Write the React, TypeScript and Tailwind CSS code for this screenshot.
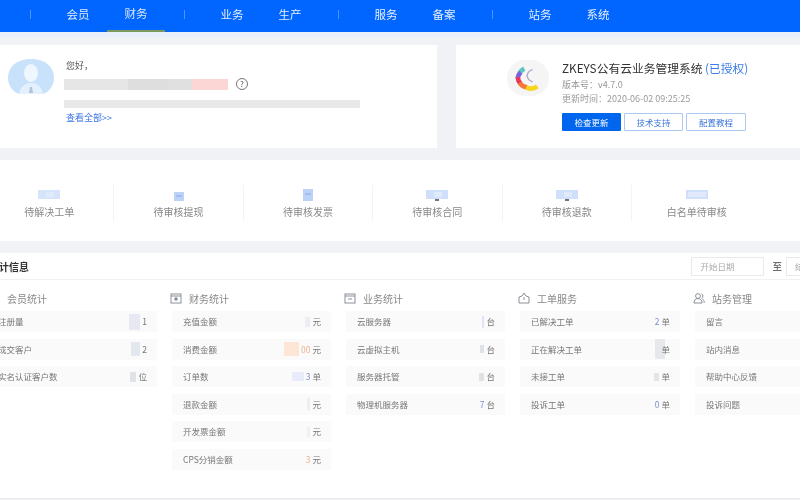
import type { ReactNode } from 'react';

const navGroups = [['会员', '财务'], ['业务', '生产'], ['服务', '备案'], ['站务', '系统']];

type Row = { label: string; blockW?: number; blockH?: number; tint?: string; value?: string; valueClass?: string; unit?: string };

const columns: { title: string; icon: ReactNode; rows: Row[] }[] = [
  {
    title: '会员统计',
    icon: null,
    rows: [
      { label: '注册量', blockW: 11, blockH: 16, tint: 'bg-[#e6e9f1]', value: '1', unit: '' },
      { label: '成交客户', blockW: 9, blockH: 14, tint: 'bg-[#e3e8ee]', value: '2', unit: '' },
      { label: '实名认证客户数', blockW: 6, blockH: 10, tint: 'bg-[#dfe2e6]', value: '', unit: '位' },
    ],
  },
  {
    title: '财务统计',
    icon: (
      <svg viewBox="0 0 12 12" className="w-3 h-3" fill="none" stroke="#8a8f98">
        <rect x="1" y="2" width="10" height="9" />
        <path d="M1 4h10" />
        <circle cx="6" cy="7" r="1.3" fill="#8a8f98" />
      </svg>
    ),
    rows: [
      { label: '充值金额', blockW: 5, blockH: 10, tint: 'bg-[#eceef1]', unit: '元' },
      { label: '消费金额', blockW: 15, blockH: 14, tint: 'bg-[#fde6d6]', value: '00', valueClass: 'text-[#f0b48c]', unit: '元' },
      { label: '订单数', blockW: 12, blockH: 9, tint: 'bg-[#e8ebfa]', value: '3', valueClass: 'text-[#7d8fd8]', unit: '单' },
      { label: '退款金额', blockW: 3, blockH: 12, tint: 'bg-[#eceef1]', unit: '元' },
      { label: '开发票金额', blockW: 3, blockH: 10, tint: 'bg-[#f0f1f3]', unit: '元' },
      { label: 'CPS分销金额', blockW: 0, value: '3', valueClass: 'text-[#f0b48c]', unit: '元' },
    ],
  },
  {
    title: '业务统计',
    icon: (
      <svg viewBox="0 0 12 12" className="w-3 h-3" fill="none" stroke="#8a8f98">
        <rect x="1" y="2" width="10" height="9" />
        <path d="M1 4h10M4 7h4" />
      </svg>
    ),
    rows: [
      { label: '云服务器', blockW: 2, blockH: 12, tint: 'bg-[#e1e4f8]', value: '', unit: '台' },
      { label: '云虚拟主机', blockW: 4, blockH: 8, tint: 'bg-[#dfe2e6]', unit: '台' },
      { label: '服务器托管', blockW: 5, blockH: 8, tint: 'bg-[#dfe1e4]', unit: '台' },
      { label: '物理机服务器', blockW: 0, value: '7', valueClass: 'text-[#7d8fd8]', unit: '台' },
    ],
  },
  {
    title: '工单服务',
    icon: (
      <svg viewBox="0 0 12 12" className="w-3 h-3" fill="none" stroke="#8a8f98">
        <path d="M1 5l3-1 2-3 2 3 3 1v6H1z" />
        <path d="M6 5v3" />
      </svg>
    ),
    rows: [
      { label: '已解决工单', blockW: 0, value: '2', valueClass: 'text-[#7d8fd8]', unit: '单' },
      { label: '正在解决工单', blockW: 10, blockH: 20, tint: 'bg-[#e6e8ec] -mr-[6px]', unit: '单' },
      { label: '未接工单', blockW: 5, blockH: 8, tint: 'bg-[#e3e5e8]', unit: '单' },
      { label: '投诉工单', blockW: 0, value: '0', valueClass: 'text-[#7d8fd8]', unit: '单' },
    ],
  },
  {
    title: '站务管理',
    icon: (
      <svg viewBox="0 0 12 12" className="w-3 h-3" fill="none" stroke="#8a8f98">
        <circle cx="5" cy="4" r="2.4" />
        <path d="M1 11c0-3 1.6-4.4 4-4.4s4 1.4 4 4.4zM8.5 1.8a2.4 2.4 0 0 1 0 4.4M9.5 7c1 .5 1.7 1.8 1.7 4" />
      </svg>
    ),
    rows: [{ label: '留言' }, { label: '站内消息' }, { label: '帮助中心反馈' }, { label: '投诉问题' }],
  },
];

const todos = ['待解决工单', '待审核提现', '待审核发票', '待审核合同', '待审核退款', '白名单待审核'];

function TodoIcon({ index }: { index: number }) {
  if (index === 1 || index === 2) {
    return (
      <svg viewBox="0 0 12 12" className="w-3 h-3">
        <rect x="1" y={index === 2 ? 0 : 3} width="10" height={index === 2 ? 12 : 9} fill="#bcd2f7" />
        <rect x="3" y={index === 2 ? 4 : 6} width="6" height="2" fill="#a3bff0" />
      </svg>
    );
  }
  return (
    <svg viewBox="0 0 22 12" className="w-[22px] h-3">
      <rect x="0" y="1" width="22" height="9" fill={index === 0 ? '#d6e4fb' : '#d0dffa'} />
      <rect x={index === 5 ? 2 : 8} y="3" width={index === 5 ? 18 : 8} height="5" fill="#e0eafc" />
      {(index === 3 || index === 4) && <rect x="9" y="10" width="4" height="2" fill="#6b7480" />}
    </svg>
  );
}

function Avatar() {
  return (
    <svg viewBox="0 0 46 36" className="w-[46px] h-[36px] shrink-0">
      <path d="M23 0C10 0 0 7 0 19c0 8 5 14 11 16h24c6-2 11-8 11-16C46 7 36 0 23 0z" fill="#c9e2fb" />
      <ellipse cx="23" cy="14" rx="7" ry="9" fill="#eef6fe" />
      <path d="M11 35c1-7 6-11 12-11s11 4 12 11z" fill="#e3f0fd" />
      <path d="M22 28h2l1 6h-4z" fill="#b4c3d6" />
    </svg>
  );
}

function Logo() {
  return (
    <div className="w-[42px] h-[36px] rounded-full bg-[#f5f5f5] flex items-center justify-center">
      <svg viewBox="0 0 30 30" className="w-[28px] h-[28px]" fill="none" strokeWidth="5">
        <path d="M11 5 A11 11 0 0 0 6 10" stroke="#5cc5c0" />
        <path d="M7 9 A11 11 0 0 0 4 15" stroke="#7a5fe0" />
        <path d="M4 14 A11 11 0 0 0 7 21" stroke="#e8365d" />
        <path d="M6 20 A11 11 0 0 0 14 25" stroke="#f5793a" />
        <path d="M13 25 A11 11 0 0 0 25 24" stroke="#f9d423" />
        <path d="M20 6 A8 8 0 0 0 14 13 A8 8 0 0 0 20 19" stroke="#b7a6c4" strokeWidth="1.5" />
      </svg>
    </div>
  );
}

export default function App() {
  return (
    <div className="w-[800px] h-[500px] overflow-hidden flex flex-col bg-[#f0f2f5] blur-[0.75px] font-['Noto_Sans_CJK_SC','Noto_Sans',sans-serif] text-[#555]">
      {/* Header */}
      <header className="h-8 shrink-0 bg-[#0066ff] flex pl-[30px]">
        {navGroups.map((group, g) => (
          <div key={g} className="w-[154px] shrink-0 flex items-center pl-[19px] relative">
            <span className="absolute left-0 top-[10px] h-[9px] w-px bg-[#4d94ff]" />
            {group.map((name) => (
              <div
                key={name}
                className={`w-[58px] h-full flex items-center justify-center text-[11.5px] pb-[3px] ${
                  name === '财务' ? 'text-[#d8e6ff] border-b-2 border-[#7a9a5c]' : 'text-[#e3eeff]'
                }`}
              >
                {name}
              </div>
            ))}
          </div>
        ))}
      </header>
      <div className="h-[5px] shrink-0 bg-[#e8f0fc]" />

      {/* Welcome + system info */}
      <div className="flex gap-[19px] mt-2 h-[103px] shrink-0">
        <section className="w-[437px] shrink-0 bg-white pl-2 pt-[14px] flex gap-3">
          <Avatar />
          <div className="flex flex-col">
            <p className="text-[9px] leading-[14px]">您好，</p>
            <div className="flex items-center mt-[5px] h-[12px] -ml-[2px]">
              <div className="w-[64px] h-[11px] bg-[#e6e6e6]" />
              <div className="w-[40px] h-[11px] bg-[#dedede]" />
              <div className="w-[24px] h-[11px] bg-[#e0e0e0]" />
              <div className="w-[36px] h-[11px] bg-[#fcd5d5]" />
              <div className="ml-2 w-3 h-3 rounded-full border border-[#777] text-[8px] leading-[10px] text-center">?</div>
            </div>
            <div className="w-[296px] h-[8px] bg-[#e8e8e8] mt-[10px] -ml-[2px]" />
            <a className="text-[9px] leading-[12px] text-[#3b74e8] mt-[4px]">查看全部&gt;&gt;</a>
          </div>
        </section>
        <section className="flex-1 bg-white pl-[51px] pt-[15px] flex gap-[13px]">
          <Logo />
          <div className="flex flex-col">
            <h2 className="text-[11.75px] leading-[16px] text-[#333] whitespace-nowrap">
              ZKEYS公有云业务管理系统 <span className="text-[#3b7de8]">(已授权)</span>
            </h2>
            <p className="text-[9px] leading-[14px] text-[#999] mt-[2px]">版本号：v4.7.0</p>
            <p className="text-[9px] leading-[14px] text-[#999]">更新时间：2020-06-02 09:25:25</p>
            <div className="flex gap-[3px] mt-[7px]">
              <button className="w-[59px] h-[18px] bg-[#0066ee] text-white text-[8.5px] rounded-[1px]">检查更新</button>
              <button className="w-[59px] h-[18px] border border-[#a9c8f2] text-[#3b74d8] text-[8.5px] rounded-[1px]">技术支持</button>
              <button className="w-[60px] h-[18px] border border-[#a9c8f2] text-[#3b74d8] text-[8.5px] rounded-[1px]">配置教程</button>
            </div>
          </div>
        </section>
      </div>

      {/* Pending items */}
      <section className="mt-3 h-[81px] shrink-0 bg-white -ml-[15px] flex items-center pt-[4px]">
        {todos.map((label, i) => (
          <div
            key={label}
            className={`w-[129.4px] shrink-0 h-[36px] flex flex-col items-center justify-between ${
              i < 5 ? 'border-r border-[#f3f4f6]' : ''
            }`}
          >
            <div className="h-3 mt-[4px]">
              <TodoIcon index={i} />
            </div>
            <span className="text-[10px] leading-[14px] text-[#888] mb-[2px]">{label}</span>
          </div>
        ))}
      </section>

      {/* Statistics */}
      <section className="mt-3 flex-1 bg-white border-b border-[#e6e8eb] mb-px">
        <div className="h-[27px] border-b border-[#f0f1f3] flex items-center justify-between -ml-[11px] -mr-[66px]">
          <h3 className="text-[10px] font-bold text-[#333]">统计信息</h3>
          <div className="flex items-center gap-2 shrink-0">
            <div className="w-[73px] h-[19px] border border-[#e8eaed] pl-2 text-[8.5px] leading-[17px] text-[#aaa]">开始日期</div>
            <span className="text-[9.5px] text-[#444]">至</span>
            <div className="w-[80px] h-[19px] border border-[#e8eaed] pl-2 text-[8.5px] leading-[17px] text-[#aaa] -ml-1">结束日期</div>
          </div>
        </div>
        <div className="grid grid-cols-[170px_159px_159px_160px_160px] gap-x-[15px] -ml-[13px] mt-[11px]">
          {columns.map((col, c) => (
            <div key={col.title}>
              <div className={`h-[14px] flex items-center gap-[7px] text-[10px] text-[#888] mb-[6px] ${c === 0 ? 'ml-[1px]' : '-ml-[2px]'}`}>
                <span className="w-3 h-3 shrink-0">{col.icon}</span>
                {col.title}
              </div>
              <div className="flex flex-col gap-[6.5px]">
                {col.rows.map((row) => (
                  <div key={row.label} className="h-[21px] bg-[#fafafa] pl-[11px] pr-[10px] flex items-center justify-between text-[8.5px] text-[#777]">
                    <span className="whitespace-nowrap">{row.label}</span>
                    <span className="flex items-center gap-[2px]">
                      {row.blockW ? (
                        <span className={row.tint} style={{ width: row.blockW, height: row.blockH }} />
                      ) : null}
                      {row.value ? <span className={row.valueClass}>{row.value}</span> : null}
                      {row.unit ? <span>{row.unit}</span> : null}
                    </span>
                  </div>
                ))}
              </div>
            </div>
          ))}
        </div>
      </section>
    </div>
  );
}
